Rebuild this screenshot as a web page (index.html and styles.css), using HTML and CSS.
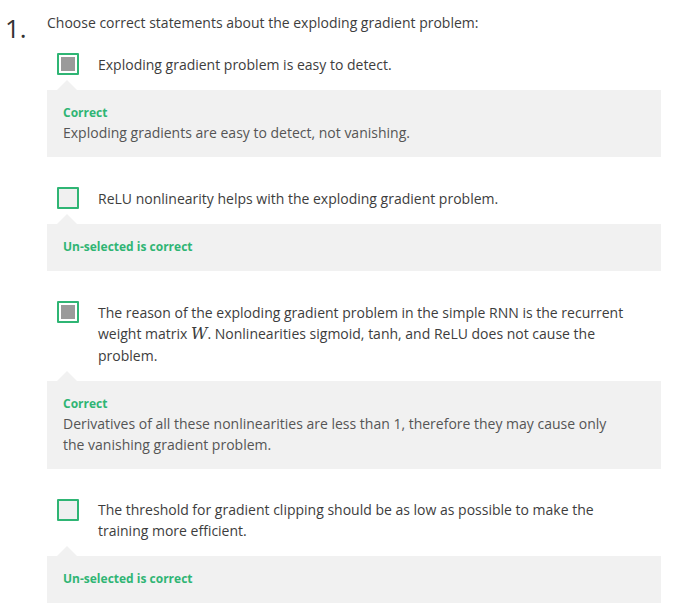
FILE: index.html
```html
<!DOCTYPE html>
<html>
<head>
<meta charset="utf-8">
<link rel="stylesheet" href="styles.css">
</head>
<body>
<div class="question">
  <div class="qnum">1.</div>
  <div class="qbody">
    <div class="qtext">Choose correct statements about the exploding gradient problem:</div>

    <div class="option">
      <span class="box checked"><span class="mark"></span></span>
      <div class="otext">Exploding gradient problem is easy to detect.</div>
    </div>
    <div class="feedback">
      <span class="arrow"></span>
      <div class="label">Correct</div>
      <div class="explain">Exploding gradients are easy to detect, not vanishing.</div>
    </div>

    <div class="option">
      <span class="box"></span>
      <div class="otext">ReLU nonlinearity helps with the exploding gradient problem.</div>
    </div>
    <div class="feedback short">
      <span class="arrow"></span>
      <div class="label">Un-selected is correct</div>
    </div>

    <div class="option">
      <span class="box checked"><span class="mark"></span></span>
      <div class="otext">The reason of the exploding gradient problem in the simple RNN is the recurrent weight matrix <span class="math">W</span>. Nonlinearities sigmoid, tanh, and ReLU does not cause the problem.</div>
    </div>
    <div class="feedback">
      <span class="arrow"></span>
      <div class="label">Correct</div>
      <div class="explain">Derivatives of all these nonlinearities are less than 1, therefore they may cause only the vanishing gradient problem.</div>
    </div>

    <div class="option">
      <span class="box"></span>
      <div class="otext">The threshold for gradient clipping should be as low as possible to make the training more efficient.</div>
    </div>
    <div class="feedback short">
      <span class="arrow"></span>
      <div class="label">Un-selected is correct</div>
    </div>
  </div>
</div>
</body>
</html>
```

FILE: styles.css
```css
html, body {
  margin: 0;
  padding: 0;
  background: #ffffff;
}
body {
  font-family: "Open Sans", "Noto Sans", sans-serif;
  color: #3d3d3d;
}
.question {
  display: flex;
  padding-top: 12px;
}
.qnum {
  width: 42px;
  padding-left: 5px;
  font-size: 26px;
  font-weight: 400;
  line-height: 30px;
  padding-top: 1px;
  color: #333;
}
.qbody {
  width: 614px;
}
.qtext {
  font-size: 14px;
  line-height: 21px;
  color: #3d3d3d;
}
.option {
  display: flex;
  align-items: flex-start;
  margin-top: 30px;
  padding-left: 10px;
}
.qtext + .option {
  margin-top: 20px;
}
.box {
  flex: none;
  box-sizing: border-box;
  width: 22px;
  height: 22px;
  border: 2px solid #2fb574;
  background: #f0f0f0;
  border-radius: 1px;
  display: flex;
  align-items: center;
  justify-content: center;
}
.box.checked {
  background: #ffffff;
}
.mark {
  width: 14px;
  height: 14px;
  background: #9a9a9a;
}
.otext {
  margin-left: 19px;
  padding-top: 0.5px;
  font-size: 14px;
  line-height: 21px;
  color: #3d3d3d;
  width: 530px;
}
.math {
  display: inline-block;
  height: 22px;
  line-height: 22px;
  vertical-align: top;
  font-family: "DejaVu Serif", "Liberation Serif", serif;
  font-style: italic;
  font-size: 16px;
}
.feedback {
  position: relative;
  margin-top: 15px;
  background: #f1f1f1;
  padding: 14px 16px 14px;
}
.feedback.short {
  padding-bottom: 15px;
}
.arrow {
  position: absolute;
  left: 10px;
  top: -10px;
  width: 0;
  height: 0;
  border-left: 10px solid transparent;
  border-right: 10px solid transparent;
  border-bottom: 10px solid #f1f1f1;
}
.label {
  font-size: 12px;
  font-weight: 700;
  line-height: 18px;
  color: #2fb574;
}
.explain {
  font-size: 14px;
  line-height: 21px;
  color: #555;
  width: 560px;
}
```
